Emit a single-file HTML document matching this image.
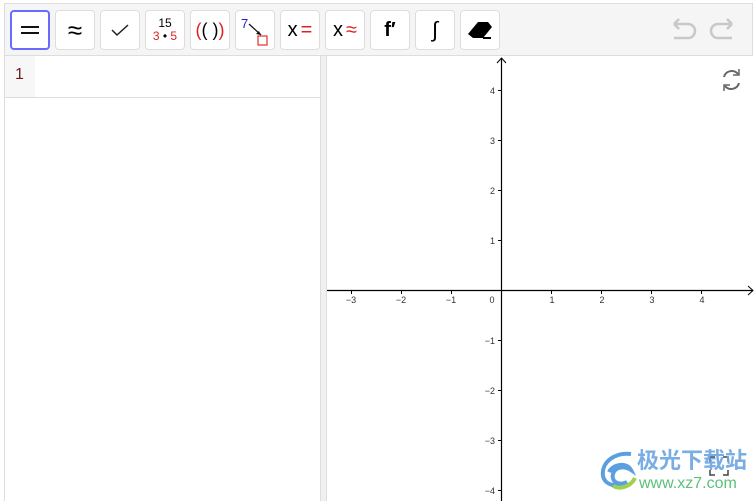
<!DOCTYPE html><html><head><style>
body{margin:0;width:755px;height:501px;background:#fff;position:relative;overflow:hidden;font-family:"Liberation Sans",sans-serif}
#tb{position:absolute;left:4px;top:3px;width:749px;height:53px;background:#f5f5f5;border:1px solid #ddd;box-sizing:border-box}
.b{position:absolute;top:10px;width:38px;height:38px;background:#fff;border:1px solid #ddd;border-radius:4px;display:flex;align-items:center;justify-content:center;font-size:20px;color:#000}
.r{color:#e02020}
#left{position:absolute;left:4px;top:56px;width:316px;height:445px;border-left:1px solid #ddd;background:#fff}
#row{position:absolute;left:0;top:0;width:316px;height:41px;border-bottom:1px solid #ddd}
#num{position:absolute;left:0;top:0;width:30px;height:41px;background:#f7f7f7;color:#6b1d1d;font-size:16px;line-height:38px;text-indent:10px}
#div{position:absolute;left:320px;top:56px;width:7px;height:445px;background:#f0f0f0;border-left:1px solid #ddd;border-right:1px solid #ddd;box-sizing:border-box}
#gr{position:absolute;left:327px;top:56px}
</style></head><body>
<div id="tb"></div>
<div class="b" style="left:10px;border:2px solid #6a6aff;width:36px;height:36px"><svg width="20" height="12"><path d="M1 3h18M1 9h18" stroke="#111" stroke-width="2"/></svg></div>
<div class="b" style="left:55px;font-size:26px">≈</div>
<div class="b" style="left:100px"><svg width="20" height="14"><path d="M2 7l5 5 11-10" fill="none" stroke="#222" stroke-width="1.5"/></svg></div>
<div class="b" style="left:145px;flex-direction:column;font-size:12px;line-height:13px"><span>15</span><span class="r" style="font-size:12px">3 <span style="color:#000">•</span> 5</span></div>
<div class="b" style="left:190px;font-size:18px"><span class="r">(</span>(&nbsp;)<span class="r">)</span></div>
<div class="b" style="left:235px"><svg width="38" height="38"><text x="5" y="17" font-size="13" fill="#2020e0" font-family="Liberation Sans">7</text><path d="M13 13l12 11" stroke="#111" stroke-width="1.2"/><path d="M25 24l-5-1 3-3z" fill="#111"/><rect x="22" y="25" width="9" height="9" fill="none" stroke="#e03030" stroke-width="1.2"/></svg></div>
<div class="b" style="left:280px">x<span class="r" style="margin-left:3px">=</span></div>
<div class="b" style="left:325px">x<span class="r" style="margin-left:3px">≈</span></div>
<div class="b" style="left:370px;font-weight:bold">f′</div>
<div class="b" style="left:415px;font-size:22px">∫</div>
<div class="b" style="left:460px"><svg width="30" height="24"><path d="M3 16l10-12h10l4 5-9 11h-10z" fill="#000"/><path d="M18 20h8" stroke="#000" stroke-width="2"/></svg></div>
<svg style="position:absolute;left:668px;top:14px" width="70" height="30"><path d="M6 10h14a7 7 0 0 1 0 14h-14M6 10l5-5M6 10l5 5" fill="none" stroke="#c8c8c8" stroke-width="2.5"/><path d="M64 10h-14a7 7 0 0 0 0 14h14M64 10l-5-5M64 10l-5 5" fill="none" stroke="#c8c8c8" stroke-width="2.5"/></svg>
<div id="left"><div id="row"><div id="num">1</div></div></div>
<div id="div"></div>
<svg id="gr" width="428" height="445" font-family="Liberation Sans" font-size="9" fill="#333">
<line x1="0" y1="234.5" x2="426" y2="234.5" stroke="#000" stroke-width="1.2"/>
<path d="M421 230l5 4.5-5 4.5" fill="none" stroke="#000"/>
<line x1="174.5" y1="2" x2="174.5" y2="445" stroke="#000" stroke-width="1.2"/>
<path d="M170 7l4.5-5 4.5 5" fill="none" stroke="#000"/>
<g stroke="#000"><path d="M24.5 234v4M74.5 234v4M124.5 234v4M224.5 234v4M274.5 234v4M324.5 234v4M374.5 234v4"/>
<path d="M171 34.5h4M171 84.5h4M171 134.5h4M171 184.5h4M171 284.5h4M171 334.5h4M171 384.5h4M171 434.5h4"/></g>
<g text-anchor="middle"><text x="24" y="247">−3</text><text x="74" y="247">−2</text><text x="124" y="247">−1</text><text x="165" y="247">0</text><text x="225" y="247">1</text><text x="275" y="247">2</text><text x="325" y="247">3</text><text x="375" y="247">4</text></g>
<g text-anchor="end"><text x="168" y="38">4</text><text x="168" y="88">3</text><text x="168" y="138">2</text><text x="168" y="188">1</text><text x="168" y="288">−1</text><text x="168" y="338">−2</text><text x="168" y="388">−3</text><text x="168" y="438">−4</text></g>
<g fill="none" stroke="#666" stroke-width="2"><path d="M397 21a8 8 0 0 1 14 -3M412 27a8 8 0 0 1 -14 3"/><path d="M412 13v6h-6M397 35v-6h6" stroke-width="1.5"/></g>
</svg>
<svg style="position:absolute;left:708px;top:455px" width="22" height="22"><path d="M2 7V2h5M15 2h5v5M20 15v5h-5M7 20H2v-5" fill="none" stroke="#444" stroke-width="1.5"/></svg>
<div style="position:absolute;left:637px;top:445px;font-size:22px;color:#6aa6e0;font-weight:bold;font-family:'Noto Sans CJK SC',sans-serif;white-space:nowrap;line-height:28px;opacity:.9">极光下载站</div>
<div style="position:absolute;left:639px;top:475px;color:#5cc07a;font-size:16px;white-space:nowrap;line-height:18px">www.xz7.com</div>
<svg style="position:absolute;left:595px;top:448px" width="45" height="45"><path d="M36 6C20 4 6 14 8 28c2 10 16 12 24 6-8 4-16 0-14-8 2-8 12-8 18-4-4-8-18-6-22 2" fill="none" stroke="#5aa0e0" stroke-width="4"/><path d="M18 38c8 4 18 0 22-8" fill="none" stroke="#a0d050" stroke-width="4"/></svg>
</body></html>
